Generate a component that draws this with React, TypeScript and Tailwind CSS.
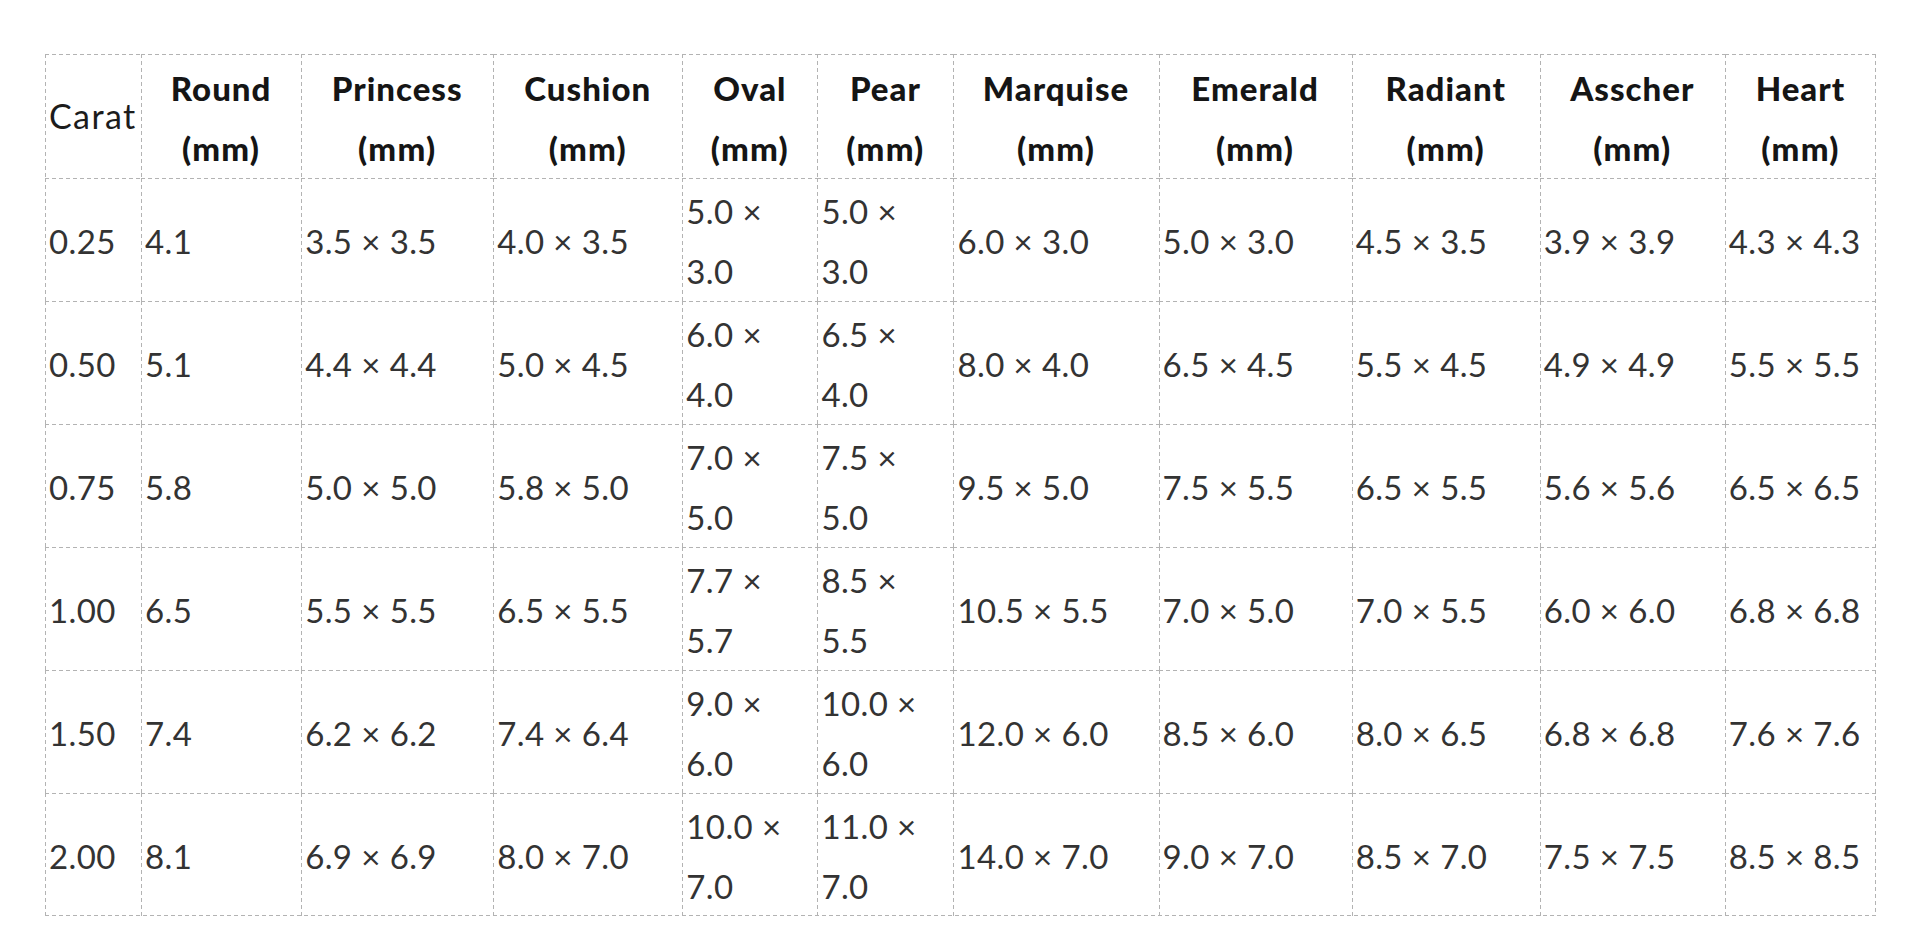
import React from "react";

const cols = [
  { name: "Round", w: 160 },
  { name: "Princess", w: 192 },
  { name: "Cushion", w: 189 },
  { name: "Oval", w: 135 },
  { name: "Pear", w: 136 },
  { name: "Marquise", w: 205 },
  { name: "Emerald", w: 193 },
  { name: "Radiant", w: 188 },
  { name: "Asscher", w: 185 },
  { name: "Heart", w: 151 },
];

const rows: string[][] = [
  ["0.25", "4.1", "3.5 × 3.5", "4.0 × 3.5", "5.0 × 3.0", "5.0 × 3.0", "6.0 × 3.0", "5.0 × 3.0", "4.5 × 3.5", "3.9 × 3.9", "4.3 × 4.3"],
  ["0.50", "5.1", "4.4 × 4.4", "5.0 × 4.5", "6.0 × 4.0", "6.5 × 4.0", "8.0 × 4.0", "6.5 × 4.5", "5.5 × 4.5", "4.9 × 4.9", "5.5 × 5.5"],
  ["0.75", "5.8", "5.0 × 5.0", "5.8 × 5.0", "7.0 × 5.0", "7.5 × 5.0", "9.5 × 5.0", "7.5 × 5.5", "6.5 × 5.5", "5.6 × 5.6", "6.5 × 6.5"],
  ["1.00", "6.5", "5.5 × 5.5", "6.5 × 5.5", "7.7 × 5.7", "8.5 × 5.5", "10.5 × 5.5", "7.0 × 5.0", "7.0 × 5.5", "6.0 × 6.0", "6.8 × 6.8"],
  ["1.50", "7.4", "6.2 × 6.2", "7.4 × 6.4", "9.0 × 6.0", "10.0 × 6.0", "12.0 × 6.0", "8.5 × 6.0", "8.0 × 6.5", "6.8 × 6.8", "7.6 × 7.6"],
  ["2.00", "8.1", "6.9 × 6.9", "8.0 × 7.0", "10.0 × 7.0", "11.0 × 7.0", "14.0 × 7.0", "9.0 × 7.0", "8.5 × 7.0", "7.5 × 7.5", "8.5 × 8.5"],
];

const cellLines =
  "bg-[image:repeating-linear-gradient(to_right,#b3b3b3_0_4px,transparent_4px_7px),repeating-linear-gradient(to_bottom,#b3b3b3_0_4px,transparent_4px_7px)] bg-[length:100%_1px,1px_100%] bg-no-repeat bg-[position:top_left,top_left]";

export default function App() {
  return (
    <div className="min-h-[947px] w-full bg-white pt-[54px] pl-[45px] font-['Lato',sans-serif]">
      <table className="table-fixed border-collapse w-[1831px] text-[33px] leading-[60px] tracking-[0.4px] text-[#333] bg-[image:repeating-linear-gradient(to_right,#b3b3b3_0_4px,transparent_4px_7px),repeating-linear-gradient(to_bottom,#b3b3b3_0_4px,transparent_4px_7px)] bg-[length:100%_1px,1px_100%] bg-no-repeat bg-[position:bottom_left,top_right]">
        <colgroup>
          <col className="w-[96px]" />
          {cols.map((c) => (
            <col key={c.name} style={{ width: c.w }} />
          ))}
        </colgroup>
        <thead>
          <tr className="h-[124px]">
            <td className={`${cellLines} pl-[4px] pr-0 py-0 align-middle text-left text-[34px] text-[#1c1c1c] tracking-[1.4px]`}>
              Carat
            </td>
            {cols.map((c) => (
              <th
                key={c.name}
                className={`${cellLines} px-[3px] pt-[3px] pb-0 align-middle text-center font-black tracking-[1px] text-[#151515]`}
              >
                {c.name}
                <br />
                <span className="tracking-[1.2px]">(mm)</span>
              </th>
            ))}
          </tr>
        </thead>
        <tbody>
          {rows.map((r) => (
            <tr key={r[0]} className="h-[123px]">
              {r.map((v, i) => (
                <td
                  key={i}
                  className={`${cellLines} pl-[4px] pr-[3px] pt-[2px] pb-0 align-middle text-left`}
                >
                  {v}
                </td>
              ))}
            </tr>
          ))}
        </tbody>
      </table>
    </div>
  );
}
